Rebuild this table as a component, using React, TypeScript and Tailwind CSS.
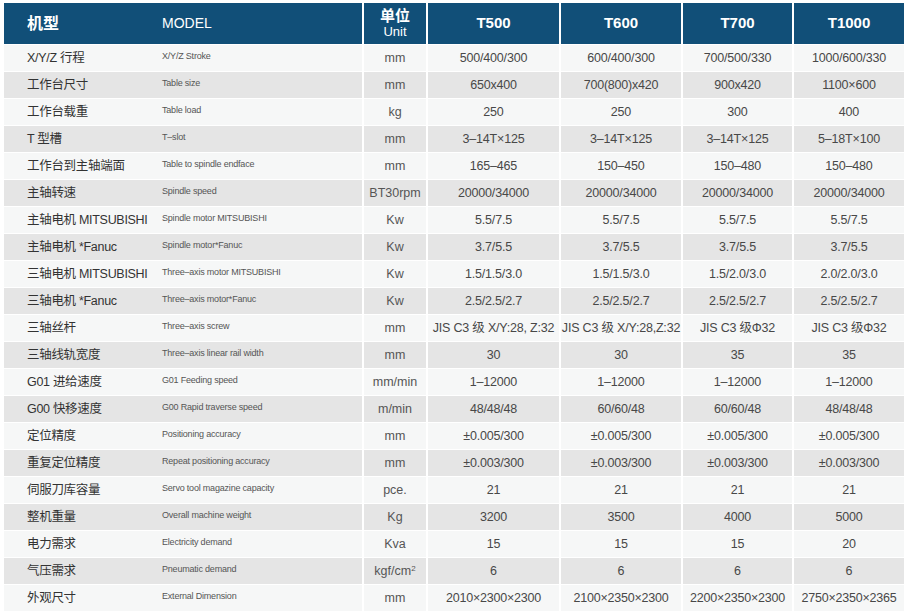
import React from "react";

const rows: [string, string, string, string, string, string, string][] = [
  ["X/Y/Z 行程", "X/Y/Z Stroke", "mm", "500/400/300", "600/400/300", "700/500/330", "1000/600/330"],
  ["工作台尺寸", "Table size", "mm", "650x400", "700(800)x420", "900x420", "1100×600"],
  ["工作台载重", "Table load", "kg", "250", "250", "300", "400"],
  ["T 型槽", "T–slot", "mm", "3–14T×125", "3–14T×125", "3–14T×125", "5–18T×100"],
  ["工作台到主轴端面", "Table to spindle endface", "mm", "165–465", "150–450", "150–480", "150–480"],
  ["主轴转速", "Spindle speed", "BT30rpm", "20000/34000", "20000/34000", "20000/34000", "20000/34000"],
  ["主轴电机 MITSUBISHI", "Spindle motor MITSUBISHI", "Kw", "5.5/7.5", "5.5/7.5", "5.5/7.5", "5.5/7.5"],
  ["主轴电机 *Fanuc", "Spindle motor*Fanuc", "Kw", "3.7/5.5", "3.7/5.5", "3.7/5.5", "3.7/5.5"],
  ["三轴电机 MITSUBISHI", "Three–axis motor MITSUBISHI", "Kw", "1.5/1.5/3.0", "1.5/1.5/3.0", "1.5/2.0/3.0", "2.0/2.0/3.0"],
  ["三轴电机 *Fanuc", "Three–axis motor*Fanuc", "Kw", "2.5/2.5/2.7", "2.5/2.5/2.7", "2.5/2.5/2.7", "2.5/2.5/2.7"],
  ["三轴丝杆", "Three–axis screw", "mm", "JIS C3 级 X/Y:28, Z:32", "JIS C3 级 X/Y:28,Z:32", "JIS C3 级Φ32", "JIS C3 级Φ32"],
  ["三轴线轨宽度", "Three–axis linear rail width", "mm", "30", "30", "35", "35"],
  ["G01 进给速度", "G01 Feeding speed", "mm/min", "1–12000", "1–12000", "1–12000", "1–12000"],
  ["G00 快移速度", "G00 Rapid traverse speed", "m/min", "48/48/48", "60/60/48", "60/60/48", "48/48/48"],
  ["定位精度", "Positioning accuracy", "mm", "±0.005/300", "±0.005/300", "±0.005/300", "±0.005/300"],
  ["重复定位精度", "Repeat positioning accuracy", "mm", "±0.003/300", "±0.003/300", "±0.003/300", "±0.003/300"],
  ["伺服刀库容量", "Servo tool magazine capacity", "pce.", "21", "21", "21", "21"],
  ["整机重量", "Overall machine weight", "Kg", "3200", "3500", "4000", "5000"],
  ["电力需求", "Electricity demand", "Kva", "15", "15", "15", "20"],
  ["气压需求", "Pneumatic demand", "KGF", "6", "6", "6", "6"],
  ["外观尺寸", "External Dimension", "mm", "2010×2300×2300", "2100×2350×2300", "2200×2350×2300", "2750×2350×2365"],
];

const font = { fontFamily: '"Liberation Sans", "Noto Sans CJK SC", sans-serif' };

export default function App() {
  return (
    <div className="min-h-[616px] w-[910px] bg-white pl-[4px] pt-[3px]" style={font}>
      <div className="grid grid-cols-[358px_62px_131px_120px_109px_110px] gap-x-[2px] gap-y-[1px]">
        {/* header */}
        <div className="flex h-[41px] items-center bg-[#114f78] text-white">
          <span className="w-[158px] pl-[23px] text-[16px] font-bold">机型</span>
          <span className="text-[14px]">MODEL</span>
        </div>
        <div className="flex h-[41px] flex-col items-center justify-center bg-[#114f78] leading-[16px] text-white">
          <span className="text-[15px] font-bold">单位</span>
          <span className="text-[13px]">Unit</span>
        </div>
        {["T500", "T600", "T700", "T1000"].map((m) => (
          <div key={m} className="flex h-[41px] items-center justify-center bg-[#114f78] text-[15px] font-bold text-white">
            {m}
          </div>
        ))}

        {rows.map((r, i) => {
          const bg = i % 2 === 0 ? "bg-[#f6f7f7]" : "bg-[#e5e5e5]";
          return (
            <React.Fragment key={r[0]}>
              <div className={`flex h-[26px] items-center ${bg}`}>
                <span className="w-[158px] pl-[23px] text-[12.5px] tracking-[-0.3px] text-[#333]">{r[0]}</span>
                <span className="-mt-[2px] text-[9px] tracking-[-0.2px] text-[#555]">{r[1]}</span>
              </div>
              <div className={`flex h-[26px] items-center justify-center text-[12.5px] text-[#555] ${bg}`}>
                {r[2] === "KGF" ? (
                  <span>
                    kgf/cm<sup className="text-[8px]">2</sup>
                  </span>
                ) : (
                  r[2]
                )}
              </div>
              {r.slice(3).map((v, j) => (
                <div
                  key={j}
                  className={`flex h-[26px] items-center justify-center whitespace-nowrap text-[12.5px] tracking-[-0.2px] text-[#484848] ${bg}`}
                >
                  {v}
                </div>
              ))}
            </React.Fragment>
          );
        })}
      </div>
    </div>
  );
}
